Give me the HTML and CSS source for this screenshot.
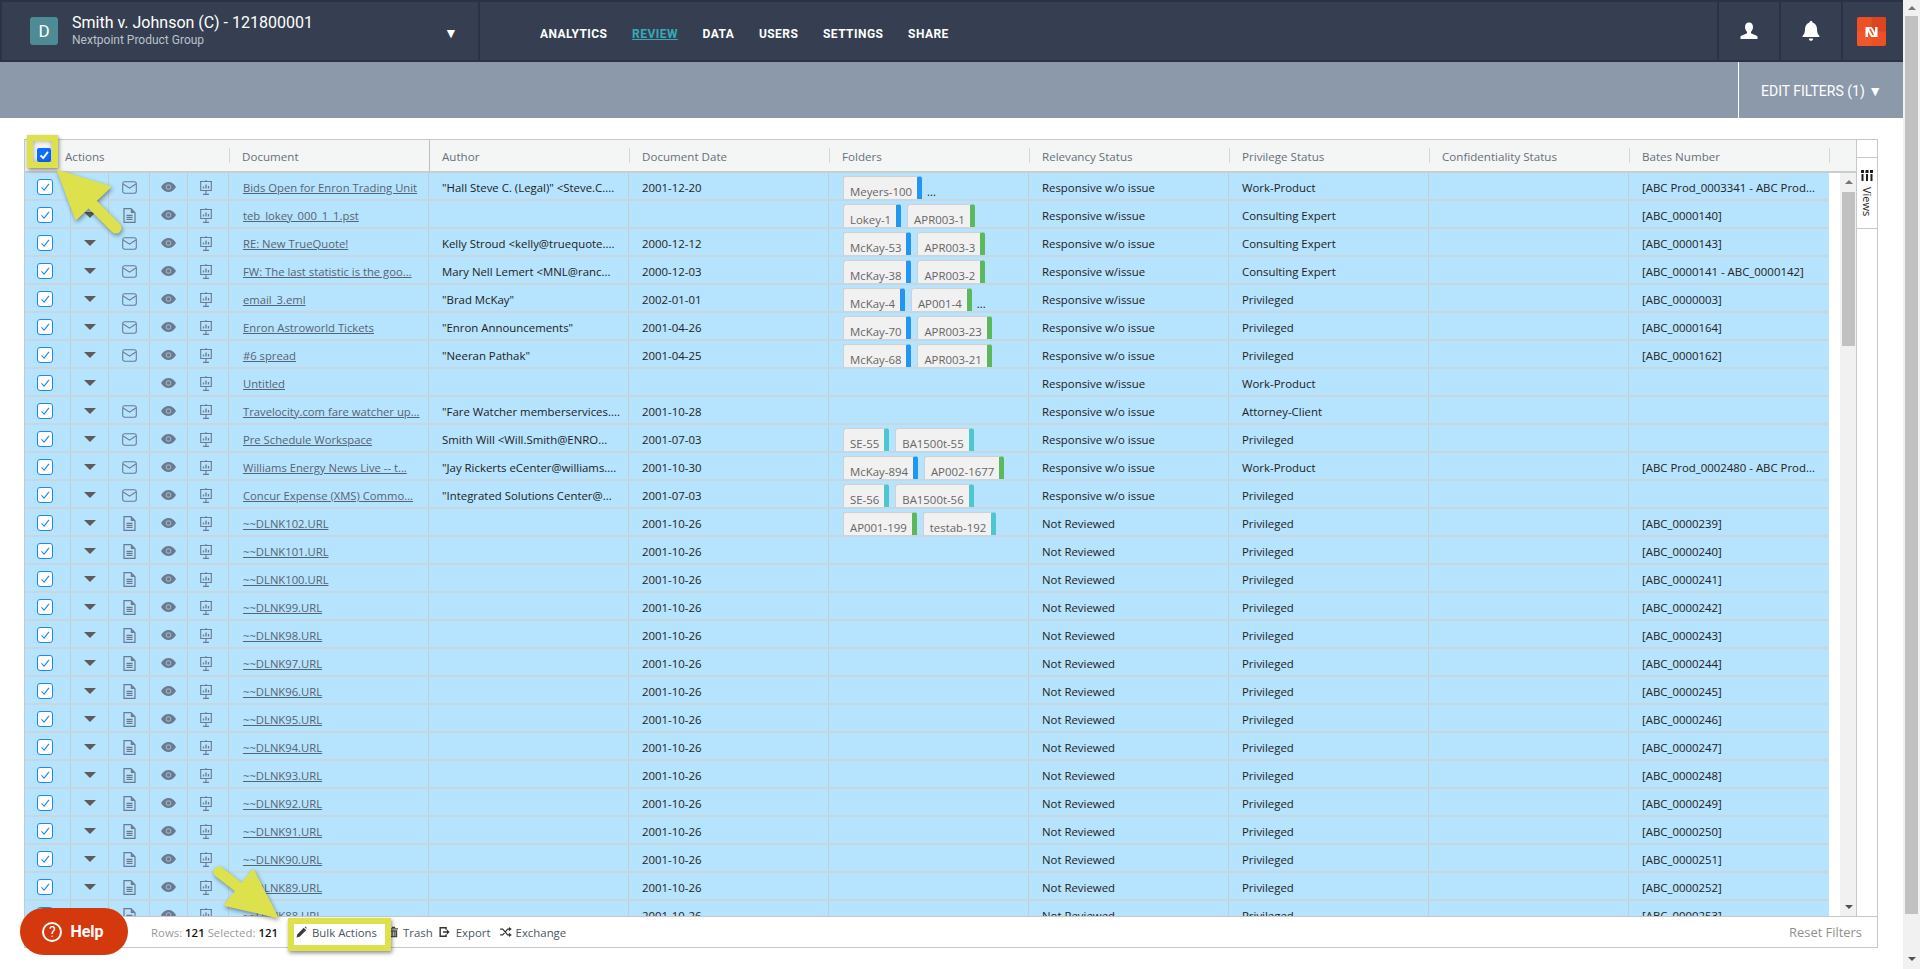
FILE: index.html
```html
<!DOCTYPE html>
<html lang="en">
<head>
<meta charset="utf-8">
<title>Review - Smith v. Johnson</title>
<link rel="stylesheet" href="styles.css">
</head>
<body>
<svg class="defs" width="0" height="0">
  <symbol id="mail" viewBox="0 0 15 13"><rect x=".7" y=".7" width="13.600" height="11.600" rx="2" fill="none" stroke="currentColor" stroke-width="1.050"/><path d="M1.200 3 7.500 7.200 13.800 3" fill="none" stroke="currentColor" stroke-width="1.050"/></symbol>
  <symbol id="file" viewBox="0 0 13 15"><path d="M1 .7h7l4 4v9.600H1z" fill="none" stroke="currentColor" stroke-width="1.200"/><path d="M7.800 .7v4.200H12z" fill="currentColor"/><path d="M3.500 7.300h6M3.500 9.300h6M3.500 11.300h6" stroke="currentColor" stroke-width="1.200"/></symbol>
  <symbol id="eye" viewBox="0 0 15 10"><path d="M0 5C2 1.600 4.600 0 7.500 0S13 1.600 15 5c-2 3.400-4.600 5-7.500 5S2 8.400 0 5z" fill="currentColor"/><circle cx="7.500" cy="5" r="2.700" fill="#9fb6cb"/><circle cx="7.500" cy="5" r="1.800" fill="currentColor"/></symbol>
  <symbol id="pres" viewBox="0 0 12 15"><path d="M6 0v1.500M0 1.500h12M.7 1.500v9h10.600v-9M6 10.500v3.500M3 14.400h6" fill="none" stroke="currentColor" stroke-width="1.100"/><path d="M3.500 8.500V6.500M6 8.500V4.500M8.500 8.500V6" stroke="currentColor" stroke-width="1.300"/></symbol>
  <symbol id="check" viewBox="0 0 16 16"><path d="M4 8.500 7 11.500 12.500 4.500" fill="none" stroke="currentColor"/></symbol>
</svg>

<div class="page">
  <header class="topbar">
    <div class="case">
      <span class="avatar">D</span>
      <div class="case-text">
        <div class="case-title">Smith v. Johnson (C) - 121800001</div>
        <div class="case-sub">Nextpoint Product Group</div>
      </div>
      <span class="case-caret">▼</span>
    </div>
    <nav class="nav">
      <a class="nav-link">ANALYTICS</a>
      <a class="nav-link active">REVIEW</a>
      <a class="nav-link">DATA</a>
      <a class="nav-link">USERS</a>
      <a class="nav-link">SETTINGS</a>
      <a class="nav-link">SHARE</a>
    </nav>
    <div class="top-icon"><svg width="20" height="20" viewBox="0 0 20 20"><path d="M10 1.500c2.600 0 4 2 4 4.500 0 2-1 4-2 4.800v1.400c1.500.8 5.500 1.800 6.500 3.300V18h-17v-2.500c1-1.500 5-2.500 6.500-3.300v-1.400C7 10 6 8 6 6c0-2.500 1.400-4.500 4-4.500z" fill="#fff"/></svg></div>
    <div class="top-icon"><svg width="22" height="22" viewBox="0 0 20 22"><path d="M10 1c1 0 1.500.6 1.500 1.400C14.500 3.200 16 6 16 9c0 4 1 5.500 2.500 7v1h-17v-1C3 14.500 4 13 4 9c0-3 1.500-5.800 4.500-6.600C8.500 1.600 9 1 10 1z M7.800 18.500h4.400c-.2 1.400-1 2.300-2.200 2.300s-2-.9-2.200-2.300z" fill="#fff"/></svg></div>
    <div class="top-icon logo-cell"><svg width="29" height="29" viewBox="0 0 29 29"><rect width="29" height="29" rx="2" fill="#ee5025"/><path d="M14.500 0H27a2 2 0 0 1 2 2v12.500H14.500z" fill="#dc4520"/><path d="M0 14.500h14.500V29H2a2 2 0 0 1-2-2z" fill="#f2572b"/><path d="M8.500 10h6.200l3.300 5.200V10h2.500v10h-6.200l-3.300-5.200V20H8.500z" fill="#fff"/><path d="M12 11.800h1.700l3.500 6.400h-1.700z" fill="#ee5025"/></svg></div>
  </header>

  <div class="filterbar">
    <div class="edit-filters">EDIT FILTERS (1) ▼</div>
  </div>

  <section class="panel">
    <div class="panel-main">
      <div class="grid">
        <div class="thead">
          <div class="th th-check"><span class="cb-head"><svg><use href="#check"/></svg></span></div>
          <div class="th th-actions">Actions</div>
          <div class="th sep strong">Document</div>
          <div class="th sep strong">Author</div>
          <div class="th sep">Document Date</div>
          <div class="th sep">Folders</div>
          <div class="th sep">Relevancy Status</div>
          <div class="th sep">Privilege Status</div>
          <div class="th sep">Confidentiality Status</div>
          <div class="th sep">Bates Number</div>
          <div class="th sep"></div>
        </div>
        <div class="tbody-wrap">
          <div class="tbody">
            <div class="row"><div class="c ck"><span class="cb"><svg><use href="#check"/></svg></span></div><div class="c ic"><i class="caret"></i></div><div class="c ic"><svg class="i i-m"><use href="#mail"/></svg></div><div class="c ic"><svg class="i i-e"><use href="#eye"/></svg></div><div class="c ic"><svg class="i i-p"><use href="#pres"/></svg></div><div class="c"><a class="doc">Bids Open for Enron Trading Unit</a></div><div class="c">"Hall Steve C. (Legal)" &lt;Steve.C....</div><div class="c">2001-12-20</div><div class="c folders"><span class="chip blue">Meyers-100</span><span class="more">...</span></div><div class="c">Responsive w/o issue</div><div class="c">Work-Product</div><div class="c"></div><div class="c">[ABC Prod_0003341 - ABC Prod...</div></div>
            <div class="row"><div class="c ck"><span class="cb"><svg><use href="#check"/></svg></span></div><div class="c ic"><i class="caret"></i></div><div class="c ic"><svg class="i i-f"><use href="#file"/></svg></div><div class="c ic"><svg class="i i-e"><use href="#eye"/></svg></div><div class="c ic"><svg class="i i-p"><use href="#pres"/></svg></div><div class="c"><a class="doc">teb_lokey_000_1_1.pst</a></div><div class="c"></div><div class="c"></div><div class="c folders"><span class="chip blue">Lokey-1</span><span class="chip green">APR003-1</span></div><div class="c">Responsive w/issue</div><div class="c">Consulting Expert</div><div class="c"></div><div class="c">[ABC_0000140]</div></div>
            <div class="row"><div class="c ck"><span class="cb"><svg><use href="#check"/></svg></span></div><div class="c ic"><i class="caret"></i></div><div class="c ic"><svg class="i i-m"><use href="#mail"/></svg></div><div class="c ic"><svg class="i i-e"><use href="#eye"/></svg></div><div class="c ic"><svg class="i i-p"><use href="#pres"/></svg></div><div class="c"><a class="doc">RE: New TrueQuote!</a></div><div class="c">Kelly Stroud &lt;kelly@truequote....</div><div class="c">2000-12-12</div><div class="c folders"><span class="chip blue">McKay-53</span><span class="chip green">APR003-3</span></div><div class="c">Responsive w/o issue</div><div class="c">Consulting Expert</div><div class="c"></div><div class="c">[ABC_0000143]</div></div>
            <div class="row"><div class="c ck"><span class="cb"><svg><use href="#check"/></svg></span></div><div class="c ic"><i class="caret"></i></div><div class="c ic"><svg class="i i-m"><use href="#mail"/></svg></div><div class="c ic"><svg class="i i-e"><use href="#eye"/></svg></div><div class="c ic"><svg class="i i-p"><use href="#pres"/></svg></div><div class="c"><a class="doc">FW: The last statistic is the goo...</a></div><div class="c">Mary Nell Lemert &lt;MNL@ranc...</div><div class="c">2000-12-03</div><div class="c folders"><span class="chip blue">McKay-38</span><span class="chip green">APR003-2</span></div><div class="c">Responsive w/issue</div><div class="c">Consulting Expert</div><div class="c"></div><div class="c">[ABC_0000141 - ABC_0000142]</div></div>
            <div class="row"><div class="c ck"><span class="cb"><svg><use href="#check"/></svg></span></div><div class="c ic"><i class="caret"></i></div><div class="c ic"><svg class="i i-m"><use href="#mail"/></svg></div><div class="c ic"><svg class="i i-e"><use href="#eye"/></svg></div><div class="c ic"><svg class="i i-p"><use href="#pres"/></svg></div><div class="c"><a class="doc">email_3.eml</a></div><div class="c">"Brad McKay"</div><div class="c">2002-01-01</div><div class="c folders"><span class="chip blue">McKay-4</span><span class="chip green">AP001-4</span><span class="more">...</span></div><div class="c">Responsive w/issue</div><div class="c">Privileged</div><div class="c"></div><div class="c">[ABC_0000003]</div></div>
            <div class="row"><div class="c ck"><span class="cb"><svg><use href="#check"/></svg></span></div><div class="c ic"><i class="caret"></i></div><div class="c ic"><svg class="i i-m"><use href="#mail"/></svg></div><div class="c ic"><svg class="i i-e"><use href="#eye"/></svg></div><div class="c ic"><svg class="i i-p"><use href="#pres"/></svg></div><div class="c"><a class="doc">Enron Astroworld Tickets</a></div><div class="c">"Enron Announcements"</div><div class="c">2001-04-26</div><div class="c folders"><span class="chip blue">McKay-70</span><span class="chip green">APR003-23</span></div><div class="c">Responsive w/o issue</div><div class="c">Privileged</div><div class="c"></div><div class="c">[ABC_0000164]</div></div>
            <div class="row"><div class="c ck"><span class="cb"><svg><use href="#check"/></svg></span></div><div class="c ic"><i class="caret"></i></div><div class="c ic"><svg class="i i-m"><use href="#mail"/></svg></div><div class="c ic"><svg class="i i-e"><use href="#eye"/></svg></div><div class="c ic"><svg class="i i-p"><use href="#pres"/></svg></div><div class="c"><a class="doc">#6 spread</a></div><div class="c">"Neeran Pathak"</div><div class="c">2001-04-25</div><div class="c folders"><span class="chip blue">McKay-68</span><span class="chip green">APR003-21</span></div><div class="c">Responsive w/o issue</div><div class="c">Privileged</div><div class="c"></div><div class="c">[ABC_0000162]</div></div>
            <div class="row"><div class="c ck"><span class="cb"><svg><use href="#check"/></svg></span></div><div class="c ic"><i class="caret"></i></div><div class="c ic"></div><div class="c ic"><svg class="i i-e"><use href="#eye"/></svg></div><div class="c ic"><svg class="i i-p"><use href="#pres"/></svg></div><div class="c"><a class="doc">Untitled</a></div><div class="c"></div><div class="c"></div><div class="c folders"></div><div class="c">Responsive w/issue</div><div class="c">Work-Product</div><div class="c"></div><div class="c"></div></div>
            <div class="row"><div class="c ck"><span class="cb"><svg><use href="#check"/></svg></span></div><div class="c ic"><i class="caret"></i></div><div class="c ic"><svg class="i i-m"><use href="#mail"/></svg></div><div class="c ic"><svg class="i i-e"><use href="#eye"/></svg></div><div class="c ic"><svg class="i i-p"><use href="#pres"/></svg></div><div class="c"><a class="doc">Travelocity.com fare watcher up...</a></div><div class="c">"Fare Watcher memberservices....</div><div class="c">2001-10-28</div><div class="c folders"></div><div class="c">Responsive w/o issue</div><div class="c">Attorney-Client</div><div class="c"></div><div class="c"></div></div>
            <div class="row"><div class="c ck"><span class="cb"><svg><use href="#check"/></svg></span></div><div class="c ic"><i class="caret"></i></div><div class="c ic"><svg class="i i-m"><use href="#mail"/></svg></div><div class="c ic"><svg class="i i-e"><use href="#eye"/></svg></div><div class="c ic"><svg class="i i-p"><use href="#pres"/></svg></div><div class="c"><a class="doc">Pre Schedule Workspace</a></div><div class="c">Smith Will &lt;Will.Smith@ENRO...</div><div class="c">2001-07-03</div><div class="c folders"><span class="chip teal">SE-55</span><span class="chip teal">BA1500t-55</span></div><div class="c">Responsive w/o issue</div><div class="c">Privileged</div><div class="c"></div><div class="c"></div></div>
            <div class="row"><div class="c ck"><span class="cb"><svg><use href="#check"/></svg></span></div><div class="c ic"><i class="caret"></i></div><div class="c ic"><svg class="i i-m"><use href="#mail"/></svg></div><div class="c ic"><svg class="i i-e"><use href="#eye"/></svg></div><div class="c ic"><svg class="i i-p"><use href="#pres"/></svg></div><div class="c"><a class="doc">Williams Energy News Live -- t...</a></div><div class="c">"Jay Rickerts eCenter@williams....</div><div class="c">2001-10-30</div><div class="c folders"><span class="chip blue">McKay-894</span><span class="chip green">AP002-1677</span></div><div class="c">Responsive w/o issue</div><div class="c">Work-Product</div><div class="c"></div><div class="c">[ABC Prod_0002480 - ABC Prod...</div></div>
            <div class="row"><div class="c ck"><span class="cb"><svg><use href="#check"/></svg></span></div><div class="c ic"><i class="caret"></i></div><div class="c ic"><svg class="i i-m"><use href="#mail"/></svg></div><div class="c ic"><svg class="i i-e"><use href="#eye"/></svg></div><div class="c ic"><svg class="i i-p"><use href="#pres"/></svg></div><div class="c"><a class="doc">Concur Expense (XMS) Commo...</a></div><div class="c">"Integrated Solutions Center@...</div><div class="c">2001-07-03</div><div class="c folders"><span class="chip teal">SE-56</span><span class="chip teal">BA1500t-56</span></div><div class="c">Responsive w/o issue</div><div class="c">Privileged</div><div class="c"></div><div class="c"></div></div>
            <div class="row"><div class="c ck"><span class="cb"><svg><use href="#check"/></svg></span></div><div class="c ic"><i class="caret"></i></div><div class="c ic"><svg class="i i-f"><use href="#file"/></svg></div><div class="c ic"><svg class="i i-e"><use href="#eye"/></svg></div><div class="c ic"><svg class="i i-p"><use href="#pres"/></svg></div><div class="c"><a class="doc">~~DLNK102.URL</a></div><div class="c"></div><div class="c">2001-10-26</div><div class="c folders"><span class="chip green">AP001-199</span><span class="chip teal">testab-192</span></div><div class="c">Not Reviewed</div><div class="c">Privileged</div><div class="c"></div><div class="c">[ABC_0000239]</div></div>
            <div class="row"><div class="c ck"><span class="cb"><svg><use href="#check"/></svg></span></div><div class="c ic"><i class="caret"></i></div><div class="c ic"><svg class="i i-f"><use href="#file"/></svg></div><div class="c ic"><svg class="i i-e"><use href="#eye"/></svg></div><div class="c ic"><svg class="i i-p"><use href="#pres"/></svg></div><div class="c"><a class="doc">~~DLNK101.URL</a></div><div class="c"></div><div class="c">2001-10-26</div><div class="c folders"></div><div class="c">Not Reviewed</div><div class="c">Privileged</div><div class="c"></div><div class="c">[ABC_0000240]</div></div>
            <div class="row"><div class="c ck"><span class="cb"><svg><use href="#check"/></svg></span></div><div class="c ic"><i class="caret"></i></div><div class="c ic"><svg class="i i-f"><use href="#file"/></svg></div><div class="c ic"><svg class="i i-e"><use href="#eye"/></svg></div><div class="c ic"><svg class="i i-p"><use href="#pres"/></svg></div><div class="c"><a class="doc">~~DLNK100.URL</a></div><div class="c"></div><div class="c">2001-10-26</div><div class="c folders"></div><div class="c">Not Reviewed</div><div class="c">Privileged</div><div class="c"></div><div class="c">[ABC_0000241]</div></div>
            <div class="row"><div class="c ck"><span class="cb"><svg><use href="#check"/></svg></span></div><div class="c ic"><i class="caret"></i></div><div class="c ic"><svg class="i i-f"><use href="#file"/></svg></div><div class="c ic"><svg class="i i-e"><use href="#eye"/></svg></div><div class="c ic"><svg class="i i-p"><use href="#pres"/></svg></div><div class="c"><a class="doc">~~DLNK99.URL</a></div><div class="c"></div><div class="c">2001-10-26</div><div class="c folders"></div><div class="c">Not Reviewed</div><div class="c">Privileged</div><div class="c"></div><div class="c">[ABC_0000242]</div></div>
            <div class="row"><div class="c ck"><span class="cb"><svg><use href="#check"/></svg></span></div><div class="c ic"><i class="caret"></i></div><div class="c ic"><svg class="i i-f"><use href="#file"/></svg></div><div class="c ic"><svg class="i i-e"><use href="#eye"/></svg></div><div class="c ic"><svg class="i i-p"><use href="#pres"/></svg></div><div class="c"><a class="doc">~~DLNK98.URL</a></div><div class="c"></div><div class="c">2001-10-26</div><div class="c folders"></div><div class="c">Not Reviewed</div><div class="c">Privileged</div><div class="c"></div><div class="c">[ABC_0000243]</div></div>
            <div class="row"><div class="c ck"><span class="cb"><svg><use href="#check"/></svg></span></div><div class="c ic"><i class="caret"></i></div><div class="c ic"><svg class="i i-f"><use href="#file"/></svg></div><div class="c ic"><svg class="i i-e"><use href="#eye"/></svg></div><div class="c ic"><svg class="i i-p"><use href="#pres"/></svg></div><div class="c"><a class="doc">~~DLNK97.URL</a></div><div class="c"></div><div class="c">2001-10-26</div><div class="c folders"></div><div class="c">Not Reviewed</div><div class="c">Privileged</div><div class="c"></div><div class="c">[ABC_0000244]</div></div>
            <div class="row"><div class="c ck"><span class="cb"><svg><use href="#check"/></svg></span></div><div class="c ic"><i class="caret"></i></div><div class="c ic"><svg class="i i-f"><use href="#file"/></svg></div><div class="c ic"><svg class="i i-e"><use href="#eye"/></svg></div><div class="c ic"><svg class="i i-p"><use href="#pres"/></svg></div><div class="c"><a class="doc">~~DLNK96.URL</a></div><div class="c"></div><div class="c">2001-10-26</div><div class="c folders"></div><div class="c">Not Reviewed</div><div class="c">Privileged</div><div class="c"></div><div class="c">[ABC_0000245]</div></div>
            <div class="row"><div class="c ck"><span class="cb"><svg><use href="#check"/></svg></span></div><div class="c ic"><i class="caret"></i></div><div class="c ic"><svg class="i i-f"><use href="#file"/></svg></div><div class="c ic"><svg class="i i-e"><use href="#eye"/></svg></div><div class="c ic"><svg class="i i-p"><use href="#pres"/></svg></div><div class="c"><a class="doc">~~DLNK95.URL</a></div><div class="c"></div><div class="c">2001-10-26</div><div class="c folders"></div><div class="c">Not Reviewed</div><div class="c">Privileged</div><div class="c"></div><div class="c">[ABC_0000246]</div></div>
            <div class="row"><div class="c ck"><span class="cb"><svg><use href="#check"/></svg></span></div><div class="c ic"><i class="caret"></i></div><div class="c ic"><svg class="i i-f"><use href="#file"/></svg></div><div class="c ic"><svg class="i i-e"><use href="#eye"/></svg></div><div class="c ic"><svg class="i i-p"><use href="#pres"/></svg></div><div class="c"><a class="doc">~~DLNK94.URL</a></div><div class="c"></div><div class="c">2001-10-26</div><div class="c folders"></div><div class="c">Not Reviewed</div><div class="c">Privileged</div><div class="c"></div><div class="c">[ABC_0000247]</div></div>
            <div class="row"><div class="c ck"><span class="cb"><svg><use href="#check"/></svg></span></div><div class="c ic"><i class="caret"></i></div><div class="c ic"><svg class="i i-f"><use href="#file"/></svg></div><div class="c ic"><svg class="i i-e"><use href="#eye"/></svg></div><div class="c ic"><svg class="i i-p"><use href="#pres"/></svg></div><div class="c"><a class="doc">~~DLNK93.URL</a></div><div class="c"></div><div class="c">2001-10-26</div><div class="c folders"></div><div class="c">Not Reviewed</div><div class="c">Privileged</div><div class="c"></div><div class="c">[ABC_0000248]</div></div>
            <div class="row"><div class="c ck"><span class="cb"><svg><use href="#check"/></svg></span></div><div class="c ic"><i class="caret"></i></div><div class="c ic"><svg class="i i-f"><use href="#file"/></svg></div><div class="c ic"><svg class="i i-e"><use href="#eye"/></svg></div><div class="c ic"><svg class="i i-p"><use href="#pres"/></svg></div><div class="c"><a class="doc">~~DLNK92.URL</a></div><div class="c"></div><div class="c">2001-10-26</div><div class="c folders"></div><div class="c">Not Reviewed</div><div class="c">Privileged</div><div class="c"></div><div class="c">[ABC_0000249]</div></div>
            <div class="row"><div class="c ck"><span class="cb"><svg><use href="#check"/></svg></span></div><div class="c ic"><i class="caret"></i></div><div class="c ic"><svg class="i i-f"><use href="#file"/></svg></div><div class="c ic"><svg class="i i-e"><use href="#eye"/></svg></div><div class="c ic"><svg class="i i-p"><use href="#pres"/></svg></div><div class="c"><a class="doc">~~DLNK91.URL</a></div><div class="c"></div><div class="c">2001-10-26</div><div class="c folders"></div><div class="c">Not Reviewed</div><div class="c">Privileged</div><div class="c"></div><div class="c">[ABC_0000250]</div></div>
            <div class="row"><div class="c ck"><span class="cb"><svg><use href="#check"/></svg></span></div><div class="c ic"><i class="caret"></i></div><div class="c ic"><svg class="i i-f"><use href="#file"/></svg></div><div class="c ic"><svg class="i i-e"><use href="#eye"/></svg></div><div class="c ic"><svg class="i i-p"><use href="#pres"/></svg></div><div class="c"><a class="doc">~~DLNK90.URL</a></div><div class="c"></div><div class="c">2001-10-26</div><div class="c folders"></div><div class="c">Not Reviewed</div><div class="c">Privileged</div><div class="c"></div><div class="c">[ABC_0000251]</div></div>
            <div class="row"><div class="c ck"><span class="cb"><svg><use href="#check"/></svg></span></div><div class="c ic"><i class="caret"></i></div><div class="c ic"><svg class="i i-f"><use href="#file"/></svg></div><div class="c ic"><svg class="i i-e"><use href="#eye"/></svg></div><div class="c ic"><svg class="i i-p"><use href="#pres"/></svg></div><div class="c"><a class="doc">~~DLNK89.URL</a></div><div class="c"></div><div class="c">2001-10-26</div><div class="c folders"></div><div class="c">Not Reviewed</div><div class="c">Privileged</div><div class="c"></div><div class="c">[ABC_0000252]</div></div>
            <div class="row"><div class="c ck"><span class="cb"><svg><use href="#check"/></svg></span></div><div class="c ic"><i class="caret"></i></div><div class="c ic"><svg class="i i-f"><use href="#file"/></svg></div><div class="c ic"><svg class="i i-e"><use href="#eye"/></svg></div><div class="c ic"><svg class="i i-p"><use href="#pres"/></svg></div><div class="c"><a class="doc">~~DLNK88.URL</a></div><div class="c"></div><div class="c">2001-10-26</div><div class="c folders"></div><div class="c">Not Reviewed</div><div class="c">Privileged</div><div class="c"></div><div class="c">[ABC_0000253]</div></div>
          </div>
          <div class="gap"></div>
          <div class="vscroll"><i class="up"></i><div class="thumb-space"><div class="thumb"></div></div><i class="down"></i></div>
        </div>
      </div>
      <aside class="views">
        <div class="views-tab"><svg width="12" height="11" viewBox="0 0 12 11"><path d="M0 0h3v3H0zM4.500 0h3v3h-3zM9 0h3v3H9z" fill="#1d1d1d"/><path d="M.5 4h2v7h-2zM5 4h2v7H5zM9.500 4h2v7h-2z" fill="#1d1d1d"/></svg><span class="views-text">Views</span></div>
      </aside>
    </div>
    <footer class="gridfoot">
      <span class="counts"><span class="lab">Rows:</span> <b>121</b> <span class="lab">Selected:</span> <b>121</b></span>
      <a class="tool tool-bulk"><svg width="11" height="12" viewBox="0 0 11 12"><path d="M.5 11.500l.7-3L7.700 1.800l2.500 2.500-6.600 6.500z" fill="#3c3c3c"/><path d="M8.500 1l.8-.6 1.600 1.600-.6.800z" fill="#3c3c3c"/></svg>Bulk Actions</a>
      <a class="tool tool-trash"><svg width="9" height="12" viewBox="0 0 11 14"><path d="M0 2.500h11V4H0zM3.500.5h4v1.500h-4zM1 5h9v8.500H1z" fill="#444"/><path d="M3.500 6.500v5.500M5.500 6.500v5.500M7.500 6.500v5.500" stroke="#fff" stroke-width=".8"/></svg>Trash</a>
      <a class="tool tool-export"><svg width="11" height="12" viewBox="0 0 14 14"><path d="M9 4V1.500H1.500v11H9V10" fill="none" stroke="#333" stroke-width="1.800"/><path d="M5 6h5V3.500L13.500 7 10 10.500V8H5z" fill="#333"/></svg>Export</a>
      <a class="tool tool-exchange"><svg width="12" height="10" viewBox="0 0 14 12"><path d="M0 2.500h3l6 7h2M0 9.500h3l6-7h2" fill="none" stroke="#333" stroke-width="1.400"/><path d="M10.500 0l3.500 2.500-3.500 2.500zM10.500 7l3.500 2.500-3.500 2.500z" fill="#333"/></svg>Exchange</a>
      <a class="reset">Reset Filters</a>
    </footer>
  </section>
</div>

<div class="pagebar"><i class="up"></i><div class="page-thumb"></div><i class="down"></i></div>

<button class="help"><span class="help-q">?</span>Help</button>

<div class="callout callout-check"></div>
<div class="callout callout-bulk"></div>
<svg class="arrows" width="1920" height="969" viewBox="0 0 1920 969">
  <g fill="#dde14b" stroke="#dde14b" stroke-linejoin="round" stroke-linecap="round">
    <path d="M58 171 110 187 76 219z" stroke-width="2"/>
    <path d="M92 204 116 228" stroke-width="11" fill="none"/>
    <path d="M277 917 253 870 225 905z" stroke-width="2"/>
    <path d="M219 872 246 893" stroke-width="11" fill="none"/>
  </g>
</svg>
</body>
</html>
```
FILE: styles.css
```css
* { box-sizing: border-box; }
html, body { margin: 0; height: 969px; overflow: hidden; }
body { display: flex; background: #fff; font-family: "Open Sans", "Liberation Sans", sans-serif; font-size: 11.4px; color: #222; }
.defs { position: absolute; }
a { text-decoration: none; color: inherit; }
i { display: block; }

.page { flex: 1; min-width: 0; display: flex; flex-direction: column; }

.topbar { height: 62px; background: #353f51; display: flex; align-items: stretch; color: #fff; font-family: Roboto, sans-serif; border: 2px solid #2a3342; border-right: 0; }
.case { width: 478px; display: flex; align-items: center; padding-left: 28px; border-right: 2px solid #2a3342; }
.avatar { width: 28px; height: 28px; border-radius: 3px; background: #4f8b95; display: flex; align-items: center; justify-content: center; font-size: 17px; margin-right: 14px; margin-top: -1px; }
.case-text { width: 372px; margin-top: -2px; }
.case-title { font-size: 16px; line-height: 20px; }
.case-sub { font-size: 12px; line-height: 15px; color: #b9c1cc; }
.case-caret { font-size: 14px; margin-top: 3px; }
.nav { flex: 1; display: flex; align-items: center; padding-left: 60px; padding-top: 5px; gap: 24.700px; }
.nav-link { font-size: 12px; font-weight: 700; letter-spacing: .45px; }
.nav-link.active { color: #38a9b8; text-decoration: underline; }
.top-icon { width: 62px; display: flex; align-items: center; justify-content: center; border-left: 2px solid #2a3342; }
.logo-cell { justify-content: flex-start; padding-left: 14px; }

.filterbar { height: 56px; background: #8c99ab; display: flex; justify-content: flex-end; }
.edit-filters { width: 165px; border-left: 1px solid #fff; color: #fff; font-family: Roboto, sans-serif; font-size: 14px; display: flex; align-items: center; padding: 1px 0 0 22px; }

.panel { margin: 21px 25px 0 24px; height: 809px; border: 1px solid #c6c9cc; display: flex; flex-direction: column; }
.panel-main { flex: 1; min-height: 0; display: flex; }
.grid { flex: 1; min-width: 0; display: flex; flex-direction: column; }
.thead { height: 33px; flex: none; display: grid; grid-template-columns: 40px 164px repeat(8, 200px) 1fr; background: #f4f5f5; border-bottom: 2px solid #c9cdd0; color: #66707c; font-size: 11.600px; }
.th { display: flex; align-items: center; padding-left: 13px; padding-top: 2px; position: relative; }
.th-check { padding: 0 0 2px 12px; }
.th-actions { padding-left: 0; }
.sep::before { content: ""; position: absolute; left: 0; top: 8px; bottom: 8px; width: 1px; background: #d4d7da; }
.sep.strong + .strong::before { top: 0; bottom: 0; background: #bcc0c4; }
.cb-head { width: 14px; height: 14px; background: #0d6efd; border-radius: 2px; color: #fff; display: block; }
.cb-head svg { display: block; width: 14px; height: 14px; stroke-width: 2.200px; }

.tbody-wrap { flex: 1; min-height: 0; display: flex; }
.tbody { width: 1804px; flex: none; overflow: hidden; background: #b6e3fd; }
.gap { width: 11px; flex: none; }
.row { height: 28px; display: grid; grid-template-columns: 46px 38px 41px 38px 41px repeat(8, 200px); border-bottom: 2px solid #c8d6df; }
.c { display: flex; align-items: center; padding: 2px 0 0 13px; white-space: nowrap; overflow: hidden; border-right: 1px solid #c3ccd2; min-width: 0; }
.c:last-child { border-right: 0; }
.ck { padding-left: 12px; border-right: 1px solid #c3ccd2; }
.ic { padding-left: 0; justify-content: center; color: #6c7a8e; }
.cb { width: 16px; height: 16px; background: #fff; border: 1px solid #1e88f5; border-radius: 3px; color: #1e88f5; display: block; }
.cb svg { display: block; width: 14px; height: 14px; stroke-width: 1.300px; }
.caret { width: 0; height: 0; border-left: 6px solid transparent; border-right: 6px solid transparent; border-top: 6px solid #5e5b58; }
.i { display: block; }
.i-m { width: 15px; height: 13px; }
.i-f { width: 13px; height: 15px; }
.i-e { width: 15px; height: 10px; }
.i-p { width: 12px; height: 15px; margin-right: 4px; }
.doc { color: #566473; text-decoration: underline; font-size: 11.250px; margin-left: 1px; }

.folders { align-items: flex-start; padding-top: 3px; padding-left: 14px; gap: 6px; }
.chip { height: 24px; flex: none; background: #f1f1f1; border: 1px solid #d0d0d0; border-bottom: 0; border-right: 5px solid #2196f3; border-radius: 3px 3px 0 0; color: #666; padding: 6px 5px 0 6px; line-height: 17px; }
.chip.green { border-right-color: #5cb85c; }
.chip.teal { border-right-color: #4cc6cf; }
.chip.blue { border-right-color: #2196f3; }
.more { align-self: flex-end; line-height: 14px; margin-left: -1px; margin-bottom: 0; }

.vscroll { width: 17px; flex: none; background: #f1f1f1; display: flex; flex-direction: column; align-items: center; }
.thumb-space { flex: 1; width: 100%; padding-top: 1px; }
.thumb { width: 13px; height: 154px; margin-left: 2px; background: #c1c1c1; }
.up, .down { width: 0; height: 0; flex: none; margin: 7px 0; border-left: 4px solid transparent; border-right: 4px solid transparent; }
.up { border-bottom: 4px solid #777; }
.down { border-top: 4px solid #505050; }

.views { width: 21px; flex: none; border-left: 1px solid #c6c9cc; padding-top: 17px; }
.views-tab { height: 72px; border-top: 1px solid #c6c9cc; border-bottom: 1px solid #c6c9cc; display: flex; flex-direction: column; align-items: center; padding-top: 12px; gap: 6px; }
.views-text { writing-mode: vertical-rl; font-size: 11px; line-height: 12px; color: #222; }

.gridfoot { height: 31px; flex: none; border-top: 1px solid #c6c9cc; display: flex; align-items: center; padding-left: 126px; color: #4a5560; }
.counts { width: 145px; flex: none; white-space: nowrap; }
.lab { color: #9a9a9a; }
.counts b { color: #111; font-weight: 600; }
.tool { display: flex; align-items: center; gap: 5px; white-space: nowrap; }
.tool-bulk { margin-right: 12px; }
.tool-trash { margin-right: 6px; }
.tool-export { gap: 6px; margin-right: 9px; }
.tool-exchange { gap: 4px; }
.reset { margin-left: auto; margin-right: 15px; color: #909090; font-size: 12.900px; }

.pagebar { width: 17px; flex: none; background: #f1f1f1; display: flex; flex-direction: column; align-items: center; }
.page-thumb { width: 13px; height: 898px; background: #c1c1c1; margin-top: -1px; }
.pagebar .up { margin: 6px 0 7px; }
.pagebar .down { margin-top: 43px; }

.help { position: absolute; left: 20px; top: 908px; width: 108px; height: 47px; border: 0; border-radius: 23.500px; background: #d4380d; color: #fff; font: 700 16px Roboto, sans-serif; display: flex; align-items: center; justify-content: center; gap: 8px; padding: 0 2px 0 0; }
.help-q { width: 20px; height: 20px; border: 2px solid #fff; border-radius: 50%; font-weight: 400; font-size: 14px; line-height: 16px; display: block; text-align: center; }

.callout { position: absolute; border: 6px solid #dde14b; box-shadow: 1px 2px 4px rgba(0,0,0,.45), inset 0 0 5px rgba(0,0,0,.35); }
.callout-check { left: 27px; top: 135px; width: 31px; height: 33px; }
.callout-bulk { left: 288px; top: 918px; width: 103px; height: 33px; box-shadow: 1px 2px 4px rgba(0,0,0,.45); }
.arrows { position: absolute; left: 0; top: 0; pointer-events: none; filter: drop-shadow(1px 2px 2px rgba(0,0,0,.4)); }
```
